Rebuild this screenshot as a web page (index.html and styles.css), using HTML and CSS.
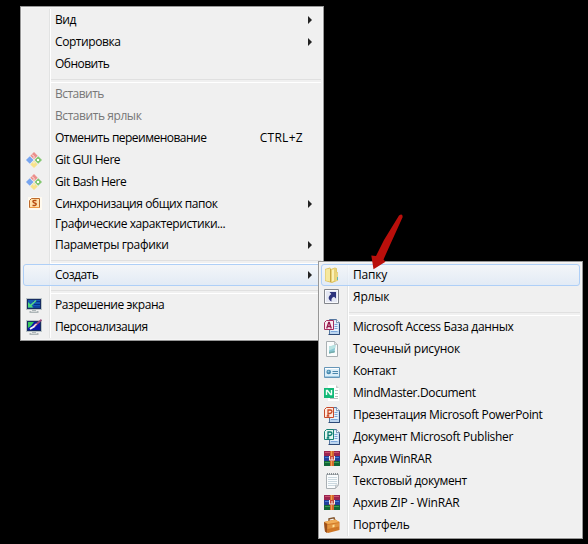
FILE: index.html
```html
<!DOCTYPE html>
<html lang="ru">
<head>
<meta charset="utf-8">
<title>Контекстное меню</title>
<link rel="stylesheet" href="styles.css">
</head>
<body>
<svg class="defs" width="0" height="0">
  <symbol id="git" viewBox="0 0 16 16">
    <path fill="#eb8f8c" d="M8 0l3.700 3.700L8 7.300 4.300 3.700z"/>
    <path fill="#77a5f0" d="M3.800 4.200L7.500 8l-3.700 3.800L0 8z"/>
    <path fill="#83c771" d="M12.200 4.200L16 8l-3.800 3.800L8.500 8z"/>
    <path fill="#f7e28a" d="M8 8.700l3.700 3.700L8 16l-3.700-3.600z"/>
    <path d="M6 2.500l2 2v2M8 10v1.500" stroke="#f8f4f0" stroke-width="1" fill="none"/>
    <path fill="#fff" d="M11 7h2v2h-2z"/>
  </symbol>
  <symbol id="sync" viewBox="0 0 16 16">
    <path fill="#fffaf0" d="M2 1h14v13H2z"/>
    <path fill="#ffe2ad" stroke="#bd6a2c" d="M5.500 2.500h8v9h-10v-7z"/>
    <path d="M4 11.500h9" stroke="#ef9a43"/>
    <path d="M10.500 4.500H8.200Q6.800 4.500 7 5.700T8.700 6.900Q10.300 7.200 10.200 8.300T8.800 9.500H6.500" stroke="#b84c10" stroke-width="1.500" fill="none"/>
  </symbol>
  <symbol id="monitor" viewBox="0 0 16 16">
    <path fill="#aeb6b8" d="M6 12h4v2h2.500v2h-9v-2H6z"/>
    <path fill="#d4d8d8" d="M5 14h6v1H5z"/>
    <path fill="#b9c3c5" d="M0 1h16v12H0z"/>
    <path fill="#182c62" d="M1 2h14v10H1z"/>
  </symbol>
  <symbol id="resolution" viewBox="0 0 16 16">
    <use href="#monitor"/>
    <path fill="#1459b5" d="M2 3h12v8H2z"/>
    <path d="M7 4.500h7M8 7.500h6M6 10h8" stroke="#072b88"/>
    <path d="M10 3.500L4 9" stroke="#58db87" stroke-width="1.600"/>
    <path fill="#4fda79" d="M2 5l5.500 5.500H2z"/>
  </symbol>
  <symbol id="personal" viewBox="0 0 16 16">
    <use href="#monitor"/>
    <path fill="#0c16a6" d="M2 3h12v8H2z"/>
    <path fill="#36c95c" d="M2 3h6L5 7 2 9z"/>
    <path d="M4 10l5-3" stroke="#f5f4ff" stroke-width="2"/>
    <path d="M8.500 7L15.500.7" stroke="#994a78" stroke-width="1.700"/>
    <path d="M8 7l2.500-2" stroke="#ffd5cf" stroke-width="1.600"/>
  </symbol>
  <symbol id="folder" viewBox="0 0 16 16">
    <path fill="#dcc05c" d="M1 2l5-1.500L7 2l4-1.500 2 1V5l1 .5v8L8 16l-7-2z"/>
    <path fill="#f6e89f" d="M1.500 2.500L6 1.500v13l-4.500-1z"/>
    <path fill="#e8d277" d="M7 2.500l4-1.500 1.500 1v11.500L7 15z"/>
    <path fill="#fbf1b9" d="M8 3l2-.7v11.500l-2 .9z"/>
    <path fill="#c7a744" d="M6 2h1v13H6z"/>
    <path fill="#e9d683" d="M11.500 5.500H14v8l-2.500 1z"/>
    <path fill="#65b5ae" d="M13 10h1v3h-1z"/>
  </symbol>
  <symbol id="shortcut" viewBox="0 0 16 16">
    <path fill="#f8f9fc" stroke="#83868c" d="M.5.500h14v14H.5z"/>
    <path fill="#e5e8f3" d="M2 2h11v11H2z"/>
    <path fill="#2d347d" d="M5.500 3H12v6.500L10 7.800C7.800 8.500 7.200 10 7.500 12.500 3.800 10.500 3.800 7.500 7.300 5z"/>
  </symbol>
  <symbol id="office" viewBox="0 0 16 16">
    <path fill="#bcd5ef" stroke="#56779f" d="M5.500.500h7l3 3v12h-10z"/>
    <path fill="#e6f1fb" d="M6.500 1.500H12v3h2.500V12h-8z"/>
    <path fill="#fff" stroke="#56779f" stroke-width=".7" d="M12.500.500v3h3"/>
    <path d="M10.500 5.500h3M10.500 7.500h3M10.500 9.500h3M7 12.500h6.500" stroke="#7ba6dc"/>
    <path d="M15.500 5v10.500H4.500" stroke="#2c4977" fill="none"/>
  </symbol>
  <symbol id="access" viewBox="0 0 16 16">
    <use href="#office"/>
    <path fill="#fae9ef" stroke="#a42d60" d="M2.500 1.500h7v9H.5v-7z"/>
    <path d="M2.700 9.500l2-6h.6l2 6M3.500 7.500h3" stroke="#98174c" stroke-width="1.300" fill="none"/>
  </symbol>
  <symbol id="bitmap" viewBox="0 0 16 16">
    <path fill="#fafcfc" stroke="#a9afb2" d="M2.500.500h8l3 3v12h-11z"/>
    <path fill="#dce2e3" stroke="#a9afb2" stroke-width=".7" d="M10.500.500v3h3"/>
    <path fill="#8ac7d3" d="M5 5.500L11.500 4l-1 7.500-5.500 1z"/>
    <path fill="#b9e3e2" d="M5 5.500L11.500 4l-.4 3L5 9.500z"/>
    <path fill="#75aaa9" d="M5 11l6-1-.5 1.500-5.500 1z"/>
  </symbol>
  <symbol id="contact" viewBox="0 0 16 16">
    <path fill="#dceef8" stroke="#6696b8" d="M.5 4.500h15v10H.5z"/>
    <path fill="#fff" d="M1 5h14v1H1z"/>
    <path fill="#a0cbe3" d="M1 13h14v1H1z"/>
    <circle cx="4.700" cy="9" r="2.300" fill="#4688af"/>
    <circle cx="4.500" cy="8.500" r="1" fill="#9bccdc"/>
    <path d="M8.500 8.500H14M8.500 10.500H14" stroke="#4d87ab"/>
  </symbol>
  <symbol id="mind" viewBox="0 0 16 16">
    <path fill="#fff" d="M4 0h8l3 3v13H4z"/>
    <path fill="#c9cccc" d="M12 0l3 3h-3z"/>
    <path d="M11 5.500h3M11 8.500h3M11 11.500h3M6 13.500h8" stroke="#b9bebe"/>
    <path fill="#13b978" d="M0 3h10v10H0z"/>
    <path d="M2.500 10V5.500h1l3 4h1V5" stroke="#f2fff9" stroke-width="1.400" fill="none"/>
  </symbol>
  <symbol id="powerpoint" viewBox="0 0 16 16">
    <use href="#office"/>
    <path fill="#ffeadf" stroke="#c64a2b" d="M2.500.500h7v10H.5v-8z"/>
    <path d="M4 9V3h2.200q1.800 0 1.800 1.600T6 6.500H4M2.700 9h2.600" stroke="#c84724" stroke-width="1.300" fill="none"/>
  </symbol>
  <symbol id="publisher" viewBox="0 0 16 16">
    <use href="#office"/>
    <path fill="#e2f6f0" stroke="#168175" d="M2.500.500h7v10H.5v-8z"/>
    <path d="M4 9V3h2.200q1.800 0 1.800 1.600T6 6.500H4M2.700 9h2.600" stroke="#087b70" stroke-width="1.300" fill="none"/>
  </symbol>
  <symbol id="rar" viewBox="0 0 16 16">
    <path fill="#9a244f" d="M0 0h16v5H0z"/><path fill="#cb5370" d="M1 1h14v1H1z"/>
    <path fill="#23409a" d="M0 5h16v5H0z"/><path fill="#477bd2" d="M1 6h14v1H1z"/>
    <path fill="#126637" d="M0 10h16v5H0z"/><path fill="#3c9e52" d="M1 11h14v1H1z"/>
    <path fill="#d4682e" d="M6 0h4v15H6z"/>
    <path fill="#efa24b" d="M7 0h1v15H7z"/>
    <path fill="#c8453c" d="M5 5h6v5H5z"/>
    <path d="M5.500 5v4h5V5M8 6v3" stroke="#f4ece1" fill="none"/>
  </symbol>
  <symbol id="text" viewBox="0 0 16 16">
    <path fill="#fafcfd" stroke="#a9afb3" d="M2.500 1.500h12v10l-3 4h-9z"/>
    <path d="M4 4.500h9M4 6.500h9M4 8.500h9M4 10.500h9M4 12.500h7" stroke="#cbd8df"/>
    <path d="M3 1h11" stroke="#888f93" stroke-dasharray="1 1" stroke-width="2"/>
    <path fill="#d9e0e3" stroke="#a9afb3" stroke-width=".6" d="M11.500 15v-3h3z"/>
  </symbol>
  <symbol id="briefcase" viewBox="0 0 16 16">
    <path d="M5 5V1.800L10 .8l1 3" stroke="#80542d" stroke-width="1.400" fill="none"/>
    <path fill="#cf7726" d="M0 5l11-2.500L15.500 5v8L4 16l-3-1.500z"/>
    <path fill="#f0ad58" d="M0 5l11-2.500L15.500 5 4 7z"/>
    <path fill="#9a501c" d="M0 5l3 2v9l-2-1.500z"/>
    <path fill="#e2943f" d="M3.500 8L15 6v3.500L3.500 12z"/>
    <path fill="#ffe096" d="M8.500 8l2-.4v2.500l-2 .4z"/>
  </symbol>
</svg>

<main class="desktop">
  <nav class="menu menu-main">
    <div class="item"><span class="icon"></span><span class="label">Вид</span><i class="arrow"></i></div>
    <div class="item"><span class="icon"></span><span class="label">Сортировка</span><i class="arrow"></i></div>
    <div class="item"><span class="icon"></span><span class="label narrow">Обновить</span></div>
    <div class="separator"></div>
    <div class="item disabled"><span class="icon"></span><span class="label narrow">Вставить</span></div>
    <div class="item disabled"><span class="icon"></span><span class="label">Вставить ярлык</span></div>
    <div class="item"><span class="icon"></span><span class="label narrow">Отменить переименование</span><span class="key">CTRL+Z</span></div>
    <div class="item"><svg class="icon"><use href="#git"/></svg><span class="label">Git GUI Here</span></div>
    <div class="item"><svg class="icon"><use href="#git"/></svg><span class="label">Git Bash Here</span></div>
    <div class="item snug"><svg class="icon"><use href="#sync"/></svg><span class="label">Синхронизация общих папок</span><i class="arrow"></i></div>
    <div class="item tight"><span class="icon"></span><span class="label">Графические характеристики...</span></div>
    <div class="item"><span class="icon"></span><span class="label wide">Параметры графики</span><i class="arrow"></i></div>
    <div class="separator"></div>
    <div class="item active"><span class="icon"></span><span class="label narrow">Создать</span><i class="arrow"></i></div>
    <div class="separator"></div>
    <div class="item"><svg class="icon"><use href="#resolution"/></svg><span class="label">Разрешение экрана</span></div>
    <div class="item"><svg class="icon"><use href="#personal"/></svg><span class="label">Персонализация</span></div>
  </nav>

  <nav class="menu menu-create">
    <div class="item active"><svg class="icon"><use href="#folder"/></svg><span class="label wider">Папку</span></div>
    <div class="item"><svg class="icon"><use href="#shortcut"/></svg><span class="label wider">Ярлык</span></div>
    <div class="separator"></div>
    <div class="item"><svg class="icon"><use href="#access"/></svg><span class="label wide">Microsoft Access База данных</span></div>
    <div class="item"><svg class="icon"><use href="#bitmap"/></svg><span class="label wider">Точечный рисунок</span></div>
    <div class="item"><svg class="icon"><use href="#contact"/></svg><span class="label">Контакт</span></div>
    <div class="item"><svg class="icon"><use href="#mind"/></svg><span class="label wide">MindMaster.Document</span></div>
    <div class="item"><svg class="icon"><use href="#powerpoint"/></svg><span class="label wide">Презентация Microsoft PowerPoint</span></div>
    <div class="item"><svg class="icon"><use href="#publisher"/></svg><span class="label medium">Документ Microsoft Publisher</span></div>
    <div class="item"><svg class="icon"><use href="#rar"/></svg><span class="label wide">Архив WinRAR</span></div>
    <div class="item"><svg class="icon"><use href="#text"/></svg><span class="label wide">Текстовый документ</span></div>
    <div class="item"><svg class="icon"><use href="#rar"/></svg><span class="label wider">Архив ZIP - WinRAR</span></div>
    <div class="item"><svg class="icon"><use href="#briefcase"/></svg><span class="label wider">Портфель</span></div>
  </nav>

  <svg class="pointer" viewBox="0 0 34 58" width="34" height="58">
    <path fill="#b90f0b" d="M28 3.500Q31.500 1 31.700 5L19 33 12.500 47.500l2 2.200L2.500 57.300.3 43.500l4.700.5L13 28z"/>
  </svg>
</main>
</body>
</html>
```

FILE: styles.css
```css
* {
  box-sizing: border-box;
}

body {
  margin: 0;
  background: #000;
  color: #000;
  font: 12px/16px "Open Sans", "Noto Sans", sans-serif;
}

.defs {
  position: absolute;
}

.desktop {
  position: relative;
  width: 588px;
  height: 544px;
  overflow: hidden;
}

.menu {
  position: absolute;
  padding: 2px;
  border: 1px solid #979797;
  background:
    linear-gradient(90deg, #e2e3e3 50%, #fff 50%) 28px 2px / 2px calc(100% - 4px) no-repeat,
    #f0f0f0;
  box-shadow: inset 0 0 0 1px #f5f5f5;
}

.menu-main {
  left: 20px;
  top: 6px;
  width: 304px;
  height: 335px;
}

.menu-create {
  left: 318px;
  top: 261px;
  width: 265px;
  height: 278px;
}

.item {
  display: flex;
  align-items: center;
  height: 22px;
  padding: 0 8px 0 2px;
  border: 1px solid transparent;
  border-radius: 3px;
}

.item.snug {
  height: 21px;
}

.item.tight {
  height: 20px;
}

.item.active {
  border-color: #aecff7;
  background: linear-gradient(rgba(244, 247, 251, 0.75), rgba(222, 233, 247, 0.75));
}

.item.disabled {
  color: #777;
}

.icon {
  flex: none;
  width: 16px;
  height: 16px;
  margin-right: 13px;
}

.label {
  flex: 1;
  white-space: nowrap;
  letter-spacing: -0.43px;
}

.label.narrow {
  letter-spacing: -0.52px;
}

.label.wide {
  letter-spacing: -0.35px;
}

.label.medium {
  letter-spacing: -0.29px;
}

.label.wider {
  letter-spacing: -0.21px;
}

.key {
  margin-right: 9px;
  letter-spacing: 0.3px;
}

.arrow {
  border: 4px solid transparent;
  border-left-color: #222;
  border-right: 0;
}

.separator {
  height: 8px;
  padding: 4px 0 0 28px;
}

.separator::before {
  content: "";
  display: block;
  height: 2px;
  border-top: 1px solid #e0e0e0;
  border-bottom: 1px solid #fff;
}

.pointer {
  position: absolute;
  left: 371px;
  top: 212px;
}
```
